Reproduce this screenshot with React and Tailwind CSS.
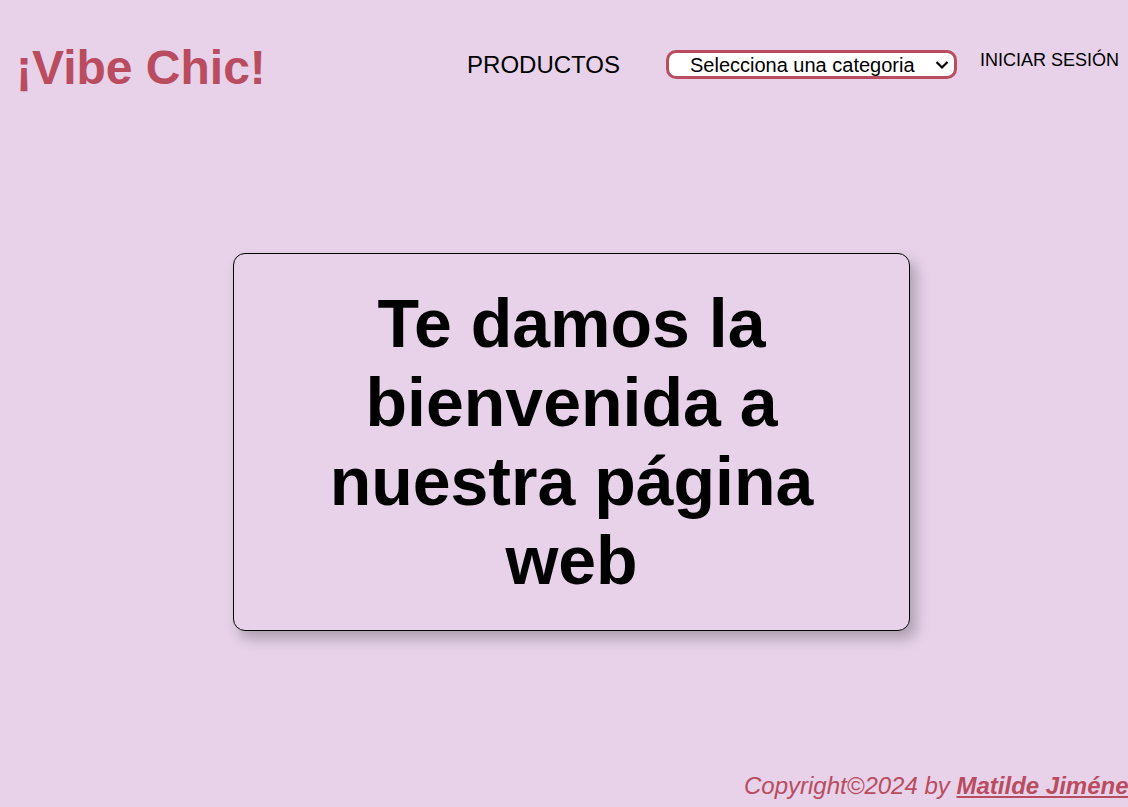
import React from 'react';

const App = () => {
  return (
    <div className="min-h-screen w-full overflow-hidden bg-[#e7d2ea] font-['Liberation_Sans',Arial,sans-serif] text-black">
      {/* Header */}
      <header className="flex items-start pt-[40px] pl-[16px] pr-[9px]">
        <h1 className="text-[48px] leading-[55px] font-bold text-[#b94c5f]">¡Vibe Chic!</h1>
        <nav className="ml-auto mt-[10px] flex items-start">
          <a href="#" className="text-[24px] leading-[28px] mt-[1px]">PRODUCTOS</a>
          <div className="relative ml-[46px]">
            <select
              defaultValue=""
              className="appearance-none w-[291px] h-[29px] rounded-[10px] border-[3px] border-[#b94c5f] bg-white pl-[21px] pr-[30px] text-[20px] leading-[22px] text-black"
            >
              <option value="">Selecciona una categoria</option>
              <option value="ropa">Ropa</option>
              <option value="accesorios">Accesorios</option>
            </select>
            <svg
              className="pointer-events-none absolute right-[8px] top-[10px] w-[14px] h-[10px]"
              viewBox="0 0 14 10"
              fill="none"
              stroke="black"
              strokeWidth="2.2"
            >
              <path d="M1.5 2 L7 7.5 L12.5 2" />
            </svg>
          </div>
          <a href="#" className="ml-[23px] text-[18px] leading-[21px]">INICIAR SESIÓN</a>
        </nav>
      </header>

      {/* Welcome card */}
      <main className="mt-[158px]">
        <div className="ml-[233px] w-[677px] rounded-[12px] border border-black px-[60px] py-[30px] shadow-[6px_8px_14px_rgba(0,0,0,0.25)]">
          <h2 className="text-center text-[68px] leading-[79px] font-bold">
            Te damos la bienvenida a nuestra página web
          </h2>
        </div>
      </main>

      {/* Footer */}
      <footer className="mt-[141px] pl-[744px] whitespace-nowrap">
        <p className="italic text-[24px] leading-[27px] text-[#b94c5f]">
          Copyright©2024 by <a href="#" className="font-bold underline">Matilde Jiménez</a>
        </p>
      </footer>
    </div>
  );
};

export default App;
